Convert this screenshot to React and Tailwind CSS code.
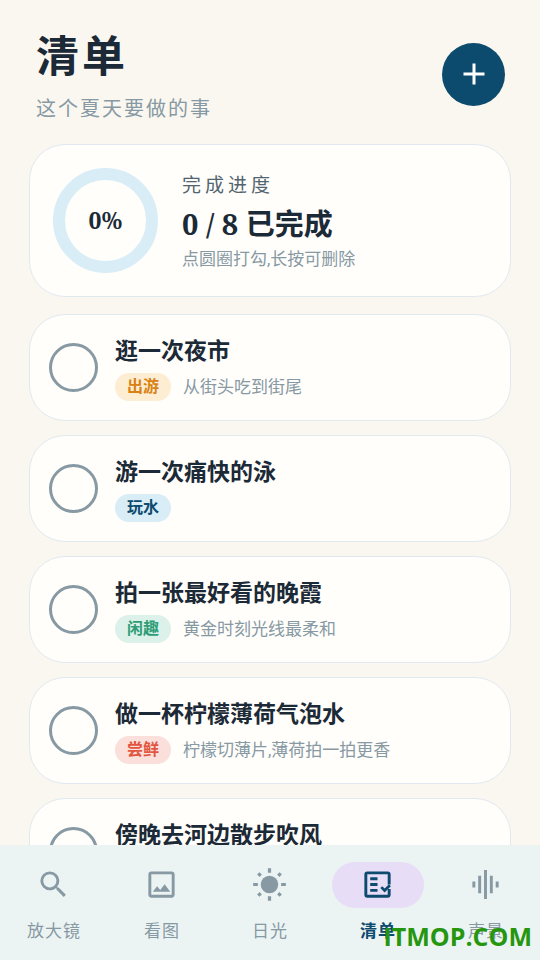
import { useState } from "react";
import { MdAdd, MdGraphicEq, MdOutlineImage, MdSearch } from "react-icons/md";
import clsx from "clsx";

const TOTAL = 8;

const TAG_STYLES = {
    出游: "bg-[#fdedd3] text-[#d98213]",
    玩水: "bg-[#d9edf7] text-[#0c4a6e]",
    闲趣: "bg-[#dcf1ea] text-[#2f9e77]",
    尝鲜: "bg-[#fadfdb] text-[#e2553f]",
};

const ITEMS = [
    { id: 1, title: "逛一次夜市", tag: "出游", note: "从街头吃到街尾" },
    { id: 2, title: "游一次痛快的泳", tag: "玩水" },
    { id: 3, title: "拍一张最好看的晚霞", tag: "闲趣", note: "黄金时刻光线最柔和" },
    { id: 4, title: "做一杯柠檬薄荷气泡水", tag: "尝鲜", note: "柠檬切薄片,薄荷拍一拍更香" },
    { id: 5, title: "傍晚去河边散步吹风", tag: "闲趣" },
];

function SunIcon({ size }) {
    return (
        <svg width={size} height={size} viewBox="0 0 24 24" fill="none" stroke="currentColor" strokeWidth="2.2" aria-hidden="true">
            <circle cx="12" cy="12" r="6" fill="currentColor" stroke="none" />
            <path d="M12 .8V4M12 20v3.2M.8 12H4M20 12h3.2" />
            <path d="M4.3 4.3L6 6M18 18l1.7 1.7M19.7 4.3L18 6M6 18l-1.7 1.7" />
        </svg>
    );
}

function ListIcon({ size }) {
    return (
        <svg width={size} height={size} viewBox="0 0 24 24" fill="none" stroke="currentColor" strokeWidth="2" aria-hidden="true">
            <path d="M20 12V5a1 1 0 0 0-1-1H5a1 1 0 0 0-1 1v14a1 1 0 0 0 1 1h14a1 1 0 0 0 1-1v-4" />
            <path d="M7 8h5M7 12h5M7 16h5" />
            <path d="M14.6 13.8l2.3 2.3 3.6-3.6" strokeWidth="1.9" />
        </svg>
    );
}

const TABS = [
    { id: "magnifier", label: "放大镜", Icon: MdSearch },
    { id: "pictures", label: "看图", Icon: MdOutlineImage },
    { id: "daylight", label: "日光", Icon: SunIcon },
    { id: "list", label: "清单", Icon: ListIcon },
    { id: "sound", label: "声景", Icon: MdGraphicEq },
];

function ProgressCard({ done }) {
    const ratio = done / TOTAL;
    const length = 2 * Math.PI * 46.5;

    return (
        <section className="flex items-center gap-6 rounded-[36px] border border-[#e1e9f0] bg-[#fffefb] px-[23px] py-[23px]">
            <div className="relative shrink-0">
                <svg className="block size-[105px] -rotate-90" viewBox="0 0 105 105" fill="none" strokeWidth="12">
                    <circle cx="52.5" cy="52.5" r="46.5" stroke="#d9edf7" />
                    {done > 0 && (
                        <circle cx="52.5" cy="52.5" r="46.5" stroke="#0c4a6e" strokeDasharray={`${length * ratio} ${length}`} />
                    )}
                </svg>
                <span className="absolute inset-0 flex items-center justify-center font-['Noto_Serif','Liberation_Serif',serif] text-[23px] font-bold">
                    {Math.round(ratio * 100)}%
                </span>
            </div>
            <div>
                <p className="text-[19px] leading-7 tracking-[4px] text-[#52646f]">完成进度</p>
                <p className="text-[29px] leading-[48px] font-bold">
                    <span className="font-['Noto_Serif','Liberation_Serif',serif]">
                        {done} / {TOTAL}{" "}
                    </span>
                    已完成
                </p>
                <p className="text-[17px] leading-5 text-[#8799a3]">点圆圈打勾,长按可删除</p>
            </div>
        </section>
    );
}

function TodoCard({ item, checked, onToggle }) {
    return (
        <li className="flex items-center gap-[17px] rounded-[36px] border border-[#e1e9f0] bg-[#fffefb] px-[19px] py-[19px]">
            <input
                id={`item-${item.id}`}
                type="checkbox"
                checked={checked}
                onChange={onToggle}
                className="size-[49px] shrink-0 cursor-pointer appearance-none rounded-full border-3 border-[#8799a3] checked:border-[#0c4a6e] checked:bg-[#0c4a6e]"
            />
            <div className="flex min-w-0 flex-col gap-1">
                <label htmlFor={`item-${item.id}`} className="cursor-pointer text-[23px] leading-[35px] font-bold">
                    {item.title}
                </label>
                <div className="flex items-center gap-3">
                    <span className={clsx("rounded-full px-3 text-base leading-7 font-bold", TAG_STYLES[item.tag])}>
                        {item.tag}
                    </span>
                    {item.note && <span className="text-[17px] leading-7 text-[#8799a3]">{item.note}</span>}
                </div>
            </div>
        </li>
    );
}

function TabBar({ active, onChange }) {
    return (
        <nav className="relative grid shrink-0 grid-cols-5 bg-[#ebf3f3] pt-[17px] pb-3.5">
            {TABS.map(({ id, label, Icon }) => {
                const selected = id === active;
                return (
                    <button
                        key={id}
                        type="button"
                        onClick={() => onChange(id)}
                        className={clsx(
                            "flex cursor-pointer flex-col items-center gap-2 text-[17px] leading-[30px] tracking-[1px]",
                            selected ? "font-bold text-[#0c4a6e]" : "text-[#8799a3]"
                        )}
                    >
                        <span
                            className={clsx(
                                "flex h-[46px] w-[92px] items-center justify-center rounded-full pr-0.5 pb-0.5",
                                selected && "bg-[#e8ddf6]"
                            )}
                        >
                            <Icon size={35} />
                        </span>
                        {label}
                    </button>
                );
            })}
            <span className="pointer-events-none absolute right-2 bottom-1 font-['Open_Sans',sans-serif] text-[25px] leading-10 font-bold text-[#27960f]">
                ITMOP.COM
            </span>
        </nav>
    );
}

export default function App() {
    const [done, setDone] = useState([]);
    const [tab, setTab] = useState("list");

    const toggle = (id) => {
        setDone((prev) => (prev.includes(id) ? prev.filter((x) => x !== id) : [...prev, id]));
    };

    return (
        <div className="flex h-screen flex-col bg-[#faf7f0] font-[Roboto,'Noto_Sans_CJK_SC',sans-serif] text-[#1b2a36]">
            <main className="min-h-0 flex-1 overflow-y-auto px-[29px] pt-[22px] pb-6 [scrollbar-width:none]">
                <header className="flex items-center justify-between pr-1.5 pl-[7px]">
                    <div>
                        <h1 className="text-[43px] leading-[70px] font-bold tracking-[3px]">清单</h1>
                        <p className="text-xl leading-[34px] tracking-[2px] text-[#8799a3]">这个夏天要做的事</p>
                    </div>
                    <button
                        type="button"
                        aria-label="添加"
                        className="flex size-[63px] cursor-pointer items-center justify-center rounded-full bg-[#0c4a6e] text-white"
                    >
                        <MdAdd size={36} />
                    </button>
                </header>

                <div className="mt-[18px]">
                    <ProgressCard done={done.length} />
                </div>

                <ul className="mt-[17px] flex flex-col gap-3.5">
                    {ITEMS.map((item) => (
                        <TodoCard
                            key={item.id}
                            item={item}
                            checked={done.includes(item.id)}
                            onToggle={() => toggle(item.id)}
                        />
                    ))}
                </ul>
            </main>
            <TabBar active={tab} onChange={setTab} />
        </div>
    );
}
